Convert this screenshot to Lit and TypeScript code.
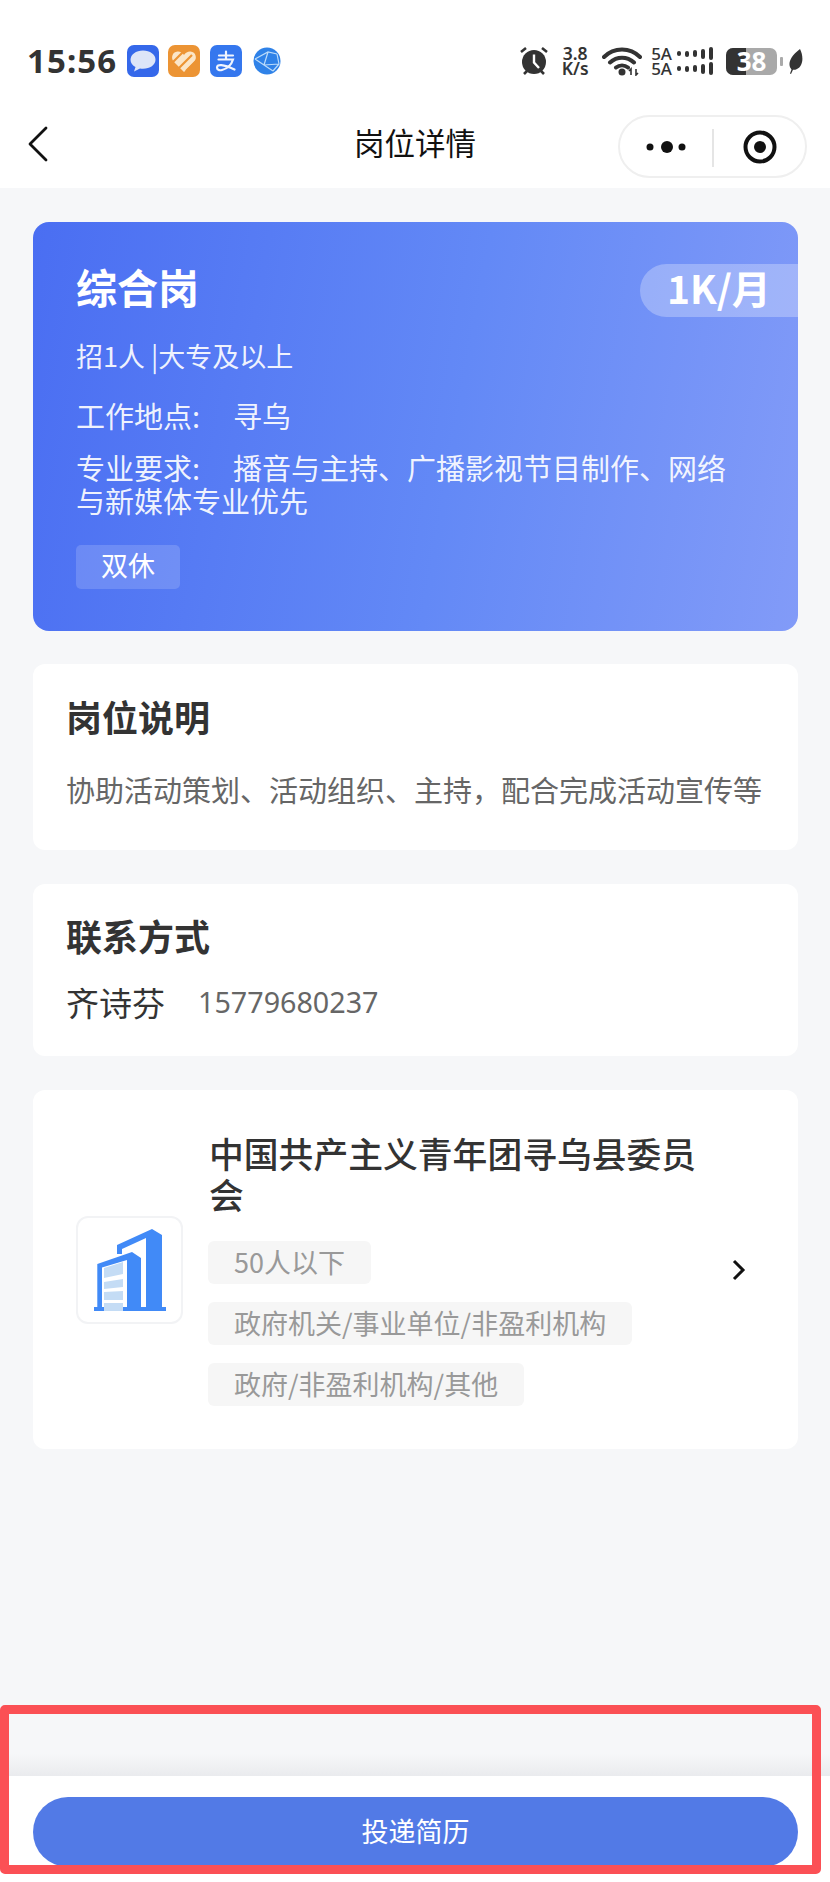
import { LitElement, html, css } from "lit";
import { customElement } from "lit/decorators.js";

@customElement("app-root")
export class AppRoot extends LitElement
{
    static styles = css`
        :host {
            display: flex;
            flex-direction: column;
            position: relative;
            width: 830px;
            height: 1882px;
            overflow: hidden;
            background: #f6f7f9;
            font-family: "Noto Sans CJK SC", "Noto Sans", sans-serif;
            color: #333;
        }
        .head {
            background: #fff;
            height: 188px;
            flex: none;
        }
        .status {
            height: 115px;
            padding: 45px 0 0 27px;
            box-sizing: border-box;
            display: flex;
            align-items: flex-start;
        }
        .time {
            font-family: "Noto Sans", sans-serif;
            font-weight: 700;
            font-size: 33px;
            line-height: 32px;
            letter-spacing: 1.1px;
            color: #333;
            width: 100px;
        }
        .apps {
            display: flex;
            align-items: center;
            gap: 9px;
        }
        .apps svg { display: block; }
        .sys {
            margin-left: auto;
            margin-right: 27px;
            display: flex;
            align-items: center;
            height: 32px;
            color: #333;
        }
        .sys svg { display: block; }
        .speed {
            margin: 0 12px 0 11px;
            width: 30px;
            font-family: "Noto Sans", sans-serif;
            font-weight: 600;
            font-size: 17.5px;
            line-height: 15px;
            text-align: center;
            white-space: nowrap;
        }
        .sim {
            margin: 0 13px 0 9px;
            display: flex;
            flex-direction: column;
        }
        .sim-row {
            display: flex;
            align-items: center;
            gap: 5px;
            height: 15px;
            font-family: "Noto Sans", sans-serif;
            font-weight: 500;
            font-size: 17px;
            line-height: 15px;
        }
        .bars {
            display: flex;
            align-items: center;
            gap: 4px;
        }
        .bars i {
            display: block;
            width: 4px;
            background: #333;
            border-radius: 2px;
        }
        .battery {
            position: relative;
            width: 51px;
            height: 27px;
            border-radius: 7px;
            overflow: hidden;
            background: #a9a9a9;
            color: #fff;
            font-family: "Noto Sans", sans-serif;
            font-weight: 700;
            font-size: 26px;
            line-height: 27px;
            text-align: center;
        }
        .battery .fill {
            position: absolute;
            left: 0;
            top: 0;
            bottom: 0;
            width: 20px;
            background: #333;
        }
        .battery span { position: relative; }
        .nub {
            width: 3px;
            height: 9px;
            margin: 0 5px 0 3px;
            background: #aaa;
            border-radius: 1px;
        }
        .nav {
            height: 73px;
            display: flex;
            align-items: center;
            justify-content: center;
            position: relative;
        }
        .nav h1 {
            margin: 0 0 20px;
            font-size: 30.5px;
            font-weight: 400;
            color: #111;
        }
        .back {
            position: absolute;
            left: 28px;
            top: 11px;
        }
        .capsule {
            position: absolute;
            left: 618px;
            top: 0;
            width: 189px;
            height: 63px;
            box-sizing: border-box;
            border: 2px solid #efefef;
            border-radius: 32px;
            display: flex;
            align-items: center;
        }
        .capsule svg { display: block; }
        .main {
            flex: 1;
            padding: 34px 32px 0 33px;
            display: flex;
            flex-direction: column;
            gap: 34px;
        }
        .job {
            height: 409px;
            margin-bottom: -1px;
            box-sizing: border-box;
            padding-top: 42px;
            border-radius: 16px;
            background: linear-gradient(100deg, #4a6ef2 0%, #6389f6 55%, #829bf8 100%);
            color: #fff;
        }
        .job-top {
            display: flex;
            justify-content: space-between;
            align-items: center;
            height: 53px;
            padding-left: 43px;
        }
        .job-top h2 {
            margin: 0 0 10px;
            font-size: 41px;
            font-weight: 700;
        }
        .pay {
            width: 158px;
            height: 53px;
            box-sizing: border-box;
            padding-left: 27px;
            border-radius: 27px 0 0 27px;
            background: rgba(255, 255, 255, 0.28);
            font-size: 39px;
            font-weight: 700;
            line-height: 46px;
            white-space: nowrap;
        }
        .line {
            margin: 0 43px;
            font-size: 29px;
            line-height: 33px;
            color: rgba(255, 255, 255, 0.92);
        }
        .edu { margin-top: 22px; font-size: 27px; }
        .place { margin-top: 27px; }
        .major { margin-top: 19px; margin-right: 66px; }
        .line b { font-weight: 400; margin-right: 33px; }
        .perk {
            display: flex;
            align-items: center;
            justify-content: center;
            width: 104px;
            height: 44px;
            box-sizing: border-box;
            padding-bottom: 5px;
            margin: 28px 0 0 43px;
            border-radius: 5px;
            background: rgba(255, 255, 255, 0.16);
            font-size: 27px;
            color: #fff;
        }
        .card {
            background: #fff;
            border-radius: 12px;
            box-sizing: border-box;
            padding: 0 33px;
        }
        .card h3 {
            margin: 0;
            font-size: 36px;
            font-weight: 700;
            line-height: 50px;
            color: #333;
        }
        .desc {
            height: 186px;
            padding-top: 27px;
        }
        .desc p {
            margin: 27px 0 0;
            font-size: 29px;
            line-height: 42px;
            color: #666;
            white-space: nowrap;
        }
        .contact {
            height: 172px;
            padding-top: 26px;
        }
        .person {
            display: flex;
            align-items: center;
            margin-top: 20px;
            font-size: 33px;
            line-height: 44px;
        }
        .person span {
            margin-left: 33px;
            font-family: "Noto Sans", sans-serif;
            font-size: 28.7px;
            color: #666;
        }
        .org {
            height: 359px;
            padding: 0 43px 0 43px;
            display: flex;
            align-items: center;
        }
        .logo {
            width: 107px;
            height: 108px;
            flex: none;
            box-sizing: border-box;
            border: 2px solid #f2f3f5;
            border-radius: 12px;
            display: flex;
            align-items: center;
            justify-content: center;
        }
        .logo svg { display: block; }
        .org-info {
            margin-left: 25px;
            width: 495px;
            flex: none;
        }
        .org-name {
            margin-left: 1px;
            font-size: 34.8px;
            font-weight: 500;
            line-height: 41px;
            color: #333;
            width: 490px;
        }
        .tags {
            margin-top: 26px;
            display: flex;
            flex-direction: column;
            align-items: flex-start;
            gap: 18px;
        }
        .tags span {
            height: 43px;
            box-sizing: border-box;
            padding: 0 26px;
            border-radius: 6px;
            background: #f6f6f6;
            color: #999;
            font-size: 27px;
            line-height: 41px;
            white-space: nowrap;
        }
        .go { margin-left: 28px; flex: none; }
        .foot {
            flex: none;
            height: 106px;
            box-sizing: border-box;
            padding: 21px 32px 0 33px;
            background: #fff;
            position: relative;
        }
        .foot::before {
            content: "";
            position: absolute;
            left: 0;
            right: 0;
            top: -22px;
            height: 22px;
            background: linear-gradient(to bottom, rgba(232, 234, 237, 0), #eaebee);
        }
        .apply {
            display: flex;
            align-items: center;
            justify-content: center;
            height: 70px;
            box-sizing: border-box;
            padding-bottom: 4px;
            border-radius: 35px;
            background: #527ae6;
            color: #fff;
            font-size: 27px;
        }
        .mark {
            position: absolute;
            left: 0;
            top: 1705px;
            width: 821px;
            height: 169px;
            box-sizing: border-box;
            border: 9px solid #fb5055;
            border-radius: 5px;
            pointer-events: none;
        }
    `;

    renderApps()
    {
        return html`
            <div class="apps">
                <svg width="32" height="32" viewBox="0 0 32 32">
                    <rect width="32" height="32" rx="7" fill="#3568ea"/>
                    <path d="M16 5.500c-7 0-12.500 4-12.500 9.300 0 3.200 2 5.800 5 7.300L7 26.500l6-3.100c1 .2 2 .3 3 .3 7 0 12.500-3.900 12.500-9S23 5.500 16 5.500z" fill="#dde5f8"/>
                </svg>
                <svg width="32" height="32" viewBox="0 0 32 32">
                    <rect width="32" height="32" rx="7" fill="#ec9434"/>
                    <path d="M16 27 6 17c-3.500-3.500-2-10 3.500-10.500C12 6.300 14.500 7.500 16 10c1.500-2.500 4-3.700 6.500-3.500C28 7 29.500 13.500 26 17z" fill="#fbe6c8"/>
                    <path d="M5 17 15 7M11 23 24 10M18 26 29 15" stroke="#ec9434" stroke-width="2.200" fill="none"/>
                </svg>
                <svg width="32" height="32" viewBox="0 0 32 32" style="margin-left:1px">
                    <rect width="32" height="32" rx="7" fill="#3577ee"/>
                    <path d="M9 10.500h14M16 6.500v8M8.500 14.500h14.500c-1.500 5-5.500 9-11 10.500-3 .8-5-.5-5-2.500 0-3.500 6-3.500 17.500 2" stroke="#f1f5fe" stroke-width="2.200" fill="none" stroke-linecap="round"/>
                </svg>
                <svg width="28" height="28" viewBox="0 0 28 28" style="margin-left:2px">
                    <circle cx="14" cy="14" r="13.500" fill="#2f82e8"/>
                    <path d="M2 12 15 5l9 2M2 12l9 6 9 6M15 5l-4 13M24 7l2 10-6 7M11 18l15-1" stroke="#bcdcfa" stroke-width="1.200" fill="none"/>
                </svg>
            </div>
        `;
    }

    renderSim()
    {
        const bars = html`
            <div class="bars">
                <i style="height:5px"></i><i style="height:6px"></i><i style="height:7px"></i><i style="height:10px"></i><i style="height:13px"></i>
            </div>
        `;
        return html`
            <div class="sim">
                <div class="sim-row">5A${bars}</div>
                <div class="sim-row">5A${bars}</div>
            </div>
        `;
    }

    renderSys()
    {
        return html`
            <div class="sys">
                <svg width="30" height="30" viewBox="0 0 30 30">
                    <circle cx="15" cy="16" r="12" fill="#333"/>
                    <path d="M15 8.500v8l5 5.500" stroke="#fff" stroke-width="2.400" fill="none"/>
                    <path d="M2 6l5-4M28 6l-5-4M5 28l3-3M25 28l-3-3" stroke="#333" stroke-width="2.600"/>
                </svg>
                <div class="speed">3.8<br />K/s</div>
                <svg width="40" height="30" viewBox="0 0 40 30">
                    <path d="M2 11c10-10 26-10 36 0M8 16.500c7-6.500 17-6.500 24 0M14 21.500c3.500-2.800 8.500-2.800 12 0" stroke="#333" stroke-width="4" fill="none" stroke-linecap="round"/>
                    <circle cx="20" cy="26" r="3.500" fill="#333"/>
                    <path d="M29 29v-6l-2 2M34 23v6l2-2" stroke="#333" stroke-width="1.600" fill="none"/>
                </svg>
                ${this.renderSim()}
                <div class="battery"><div class="fill"></div><span>38</span></div>
                <div class="nub"></div>
                <svg width="15" height="25" viewBox="0 0 15 25">
                    <path d="M12 0c4 8 3 17-3 20-1.500.8-3 1-4 .8L3 25l-1-.6 1.500-4C0 17 0 9 12 0z" fill="#333"/>
                </svg>
            </div>
        `;
    }

    renderNav()
    {
        return html`
            <div class="nav">
                <svg class="back" width="20" height="36" viewBox="0 0 20 36">
                    <path d="M18 2 2 18l16 16" stroke="#111" stroke-width="2.800" fill="none" stroke-linecap="round" stroke-linejoin="round"/>
                </svg>
                <h1>岗位详情</h1>
                <div class="capsule">
                    <svg width="185" height="59" viewBox="0 0 185 59">
                        <circle cx="30" cy="30" r="3.500" fill="#111"/>
                        <circle cx="47" cy="30" r="6" fill="#111"/>
                        <circle cx="62" cy="30" r="3.500" fill="#111"/>
                        <path d="M93 12v38" stroke="#e5e5e5" stroke-width="2"/>
                        <circle cx="140" cy="30" r="14.500" stroke="#111" stroke-width="4" fill="none"/>
                        <circle cx="140" cy="30" r="6" fill="#111"/>
                    </svg>
                </div>
            </div>
        `;
    }

    renderOrgLogo()
    {
        return html`
            <svg width="72" height="82" viewBox="0 0 72 82">
                <path d="M23 16 58 0l10 6v72h4v4H52V9L28 20v5h-5z" fill="#418af7"/>
                <path d="M3.300 35 38 23l9 6v49h5v4H0v-4h3.300z" fill="#418af7"/>
                <path d="M8 38.500 33 31v47H8z" fill="#fff"/>
                <path d="M10 39l19-6v12l-19 4zM10 53l19-3v8l-19 2zM10 63l19-1v9H10zM10 74h19v8H10z" fill="#c4dcf5"/>
            </svg>
        `;
    }

    render()
    {
        return html`
            <div class="head">
                <div class="status">
                    <div class="time">15:56</div>
                    ${this.renderApps()}
                    ${this.renderSys()}
                </div>
                ${this.renderNav()}
            </div>
            <div class="main">
                <section class="job">
                    <div class="job-top">
                        <h2>综合岗</h2>
                        <div class="pay">1K/月</div>
                    </div>
                    <div class="line edu">招1人 |大专及以上</div>
                    <div class="line place"><b>工作地点:</b>寻乌</div>
                    <div class="line major"><b>专业要求:</b>播音与主持、广播影视节目制作、网络与新媒体专业优先</div>
                    <div class="perk">双休</div>
                </section>
                <section class="card desc">
                    <h3>岗位说明</h3>
                    <p>协助活动策划、活动组织、主持\uff0c配合完成活动宣传等</p>
                </section>
                <section class="card contact">
                    <h3>联系方式</h3>
                    <div class="person">齐诗芬<span>15779680237</span></div>
                </section>
                <section class="card org">
                    <div class="logo">${this.renderOrgLogo()}</div>
                    <div class="org-info">
                        <div class="org-name">中国共产主义青年团寻乌县委员会</div>
                        <div class="tags">
                            <span>50人以下</span>
                            <span>政府机关/事业单位/非盈利机构</span>
                            <span>政府/非盈利机构/其他</span>
                        </div>
                    </div>
                    <svg class="go" width="16" height="24" viewBox="0 0 16 24">
                        <path d="M3 3l9 9-9 9" stroke="#111" stroke-width="3" fill="none"/>
                    </svg>
                </section>
            </div>
            <div class="foot">
                <div class="apply">投递简历</div>
            </div>
            <div class="mark"></div>
        `;
    }
}
